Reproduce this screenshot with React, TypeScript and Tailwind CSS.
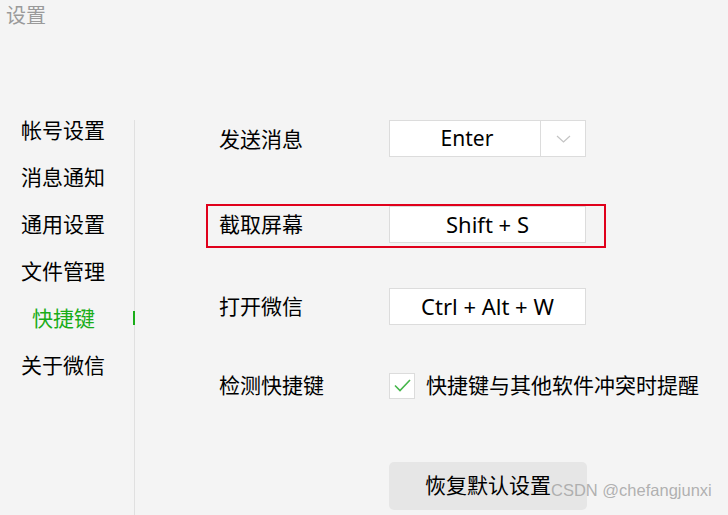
import React from 'react';

const menu = ['帐号设置', '消息通知', '通用设置', '文件管理', '快捷键', '关于微信'];
const font = { fontFamily: '"Noto Sans", "Noto Sans CJK SC", sans-serif' };

const KeyBox = ({ children }: { children: React.ReactNode }) => (
  <div className="flex h-[37px] w-[197px] items-center justify-center border border-[#dcdcdc] bg-white text-[22px] text-black">
    {children}
  </div>
);

const App = () => {
  return (
    <div className="relative flex h-[515px] w-[728px] flex-col overflow-hidden bg-[#f4f4f4]" style={font}>
      {/* Title */}
      <div className="pl-[6px] pt-[3px] text-[20px] leading-[26px] text-[#9a9a9a]">设置</div>

      <div className="mt-[91px] flex flex-1">
        {/* Sidebar */}
        <div className="relative flex w-[135px] flex-col gap-[27px] border-r border-[#e0e0e0]">
          {menu.map((item) => {
            const active = item === '快捷键';
            return (
              <div
                key={item}
                className={`relative h-[20px] text-[21px] leading-[20px] ${active ? 'pl-[32px] text-[#1aad19]' : 'pl-[21px] text-black'}`}
              >
                {item}
                {active && <span className="absolute right-[-1px] top-[3px] h-[14px] w-[2px] bg-[#1aad19]"></span>}
              </div>
            );
          })}
        </div>

        {/* Content */}
        <div className="flex flex-1 flex-col pl-[84px] text-[21px] text-black">
          <div className="flex h-[37px] items-center">
            <span className="w-[170px] pt-[2px]">发送消息</span>
            <div className="flex h-[37px] w-[197px] border border-[#dcdcdc] bg-white">
              <div className="flex flex-1 items-center justify-center pl-[4px] text-[21px]">Enter</div>
              <div className="flex w-[45px] items-center justify-center border-l border-[#dcdcdc]">
                <svg width="15" height="8" viewBox="0 0 15 8" fill="none">
                  <path d="M1 1l6.5 6 6.5-6" stroke="#c4c4c4" strokeWidth="1.2" />
                </svg>
              </div>
            </div>
          </div>

          <div className="relative mt-[49px] flex h-[37px] items-center">
            <span className="w-[170px]">截取屏幕</span>
            <KeyBox>Shift + S</KeyBox>
            <span className="absolute left-[-13px] top-[-2px] h-[44px] w-[400px] border-2 border-[#e0001b]"></span>
          </div>

          <div className="mt-[45px] flex h-[37px] items-center">
            <span className="w-[170px]">打开微信</span>
            <KeyBox>Ctrl + Alt + W</KeyBox>
          </div>

          <div className="mt-[42px] flex h-[37px] items-center">
            <span className="w-[170px]">检测快捷键</span>
            <div className="flex h-[26px] w-[26px] items-center justify-center border border-[#dcdcdc] bg-white">
              <svg width="17" height="13" viewBox="0 0 17 13" fill="none">
                <path d="M1 6.5l5 5L16 1" stroke="#45b64a" strokeWidth="1.6" />
              </svg>
            </div>
            <span className="ml-[11px]">快捷键与其他软件冲突时提醒</span>
          </div>

          <button className="ml-[170px] mt-[58px] flex h-[48px] w-[198px] items-center justify-center rounded-[5px] bg-[#e6e6e6] text-[21px] text-black">
            恢复默认设置
          </button>
        </div>
      </div>

      {/* Watermark */}
      <span
        className="absolute left-[551px] top-[479px] text-[16.5px] leading-[22px] text-[#a8a8a8]/90"
        style={{ fontFamily: '"Liberation Sans", Arial, sans-serif' }}
      >
        CSDN @chefangjunxi
      </span>
    </div>
  );
};

export default App;
